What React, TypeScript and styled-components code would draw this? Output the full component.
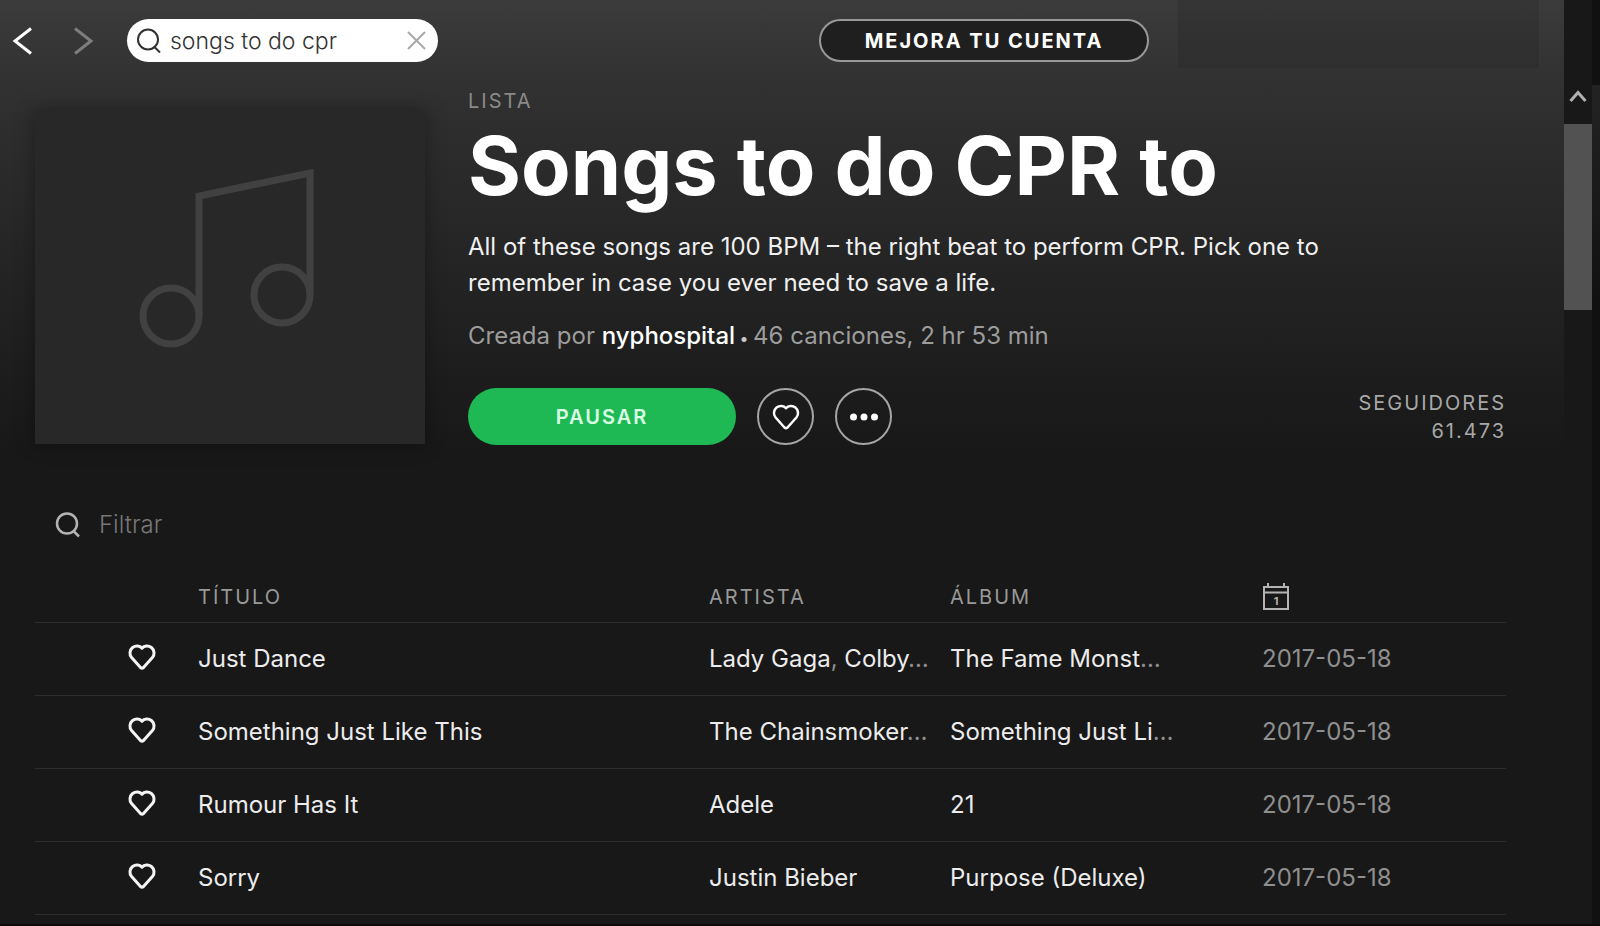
import React, { useState } from "react";
import styled, { createGlobalStyle } from "styled-components";

const GlobalStyle = createGlobalStyle`
  *, *::before, *::after { box-sizing: border-box; }
  body {
    margin: 0;
    background: #181818;
    color: #fff;
    font-family: Inter, "Liberation Sans", sans-serif;
    font-size: 24px;
    line-height: 36px;
  }
  button, input { font: inherit; color: inherit; border: 0; padding: 0; background: none; }
  button { cursor: pointer; }
  input:focus { outline: none; }
  a { color: inherit; text-decoration: none; }
  svg { display: block; flex: none; overflow: visible; }
`;

const Shell = styled.div`
  display: grid;
  grid-template-columns: minmax(0, 1fr) 28px 8px;
  min-height: 100vh;
  border-bottom: 2px solid #0d0a0b;
`;

const Main = styled.main`
  background: linear-gradient(#3b3b3b, #333 70px, #2e2e2e 120px, #181818 450px);
`;

const TopBar = styled.header`
  display: flex;
  align-items: flex-start;
  height: 87px;
  padding-right: 25px;
`;

const History = styled.nav`
  display: flex;
  gap: 40px;
  padding: 27px 32px 0 13px;
`;

const HistoryButton = styled.button<{ $muted?: boolean }>`
  display: flex;
  color: ${(p) => (p.$muted ? "#7d7d7d" : "#fff")};
`;

const SearchBox = styled.form`
  display: flex;
  align-items: center;
  gap: 9px;
  width: 311px;
  height: 43px;
  margin-top: 19px;
  padding: 0 12px 0 10px;
  border-radius: 22px;
  background: #fff;
  color: #333;
`;

const SearchInput = styled.input`
  flex: 1;
  min-width: 0;
  font-size: 23px;
  font-weight: 300;
`;

const ClearButton = styled.button`
  display: flex;
  color: #a8a8a8;
`;

const UpgradeButton = styled.button`
  width: 330px;
  height: 43px;
  margin: 19px 29px 0 auto;
  border: 2px solid #999;
  border-radius: 22px;
  background: #1f1f1f;
  font-size: 20px;
  font-weight: 700;
  letter-spacing: 2px;
`;

const AccountArea = styled.div`
  width: 361px;
  height: 68px;
  background: rgba(24, 24, 24, 0.17);
`;

const Hero = styled.section`
  display: flex;
  align-items: flex-start;
  gap: 43px;
  padding: 0 60px 0 35px;
`;

const Cover = styled.div`
  display: flex;
  flex: none;
  justify-content: center;
  width: 390px;
  height: 334px;
  margin-top: 23px;
  padding-top: 58px;
  background: #282828;
  box-shadow: 0 0 18px rgba(0, 0, 0, 0.35);
  color: #414141;
`;

const Details = styled.div`
  flex: 1;
  min-width: 0;
`;

const Caption = styled.p`
  margin: 0;
  font-size: 20px;
  line-height: 28px;
  letter-spacing: 2px;
  color: #8a8a8a;
`;

const Title = styled.h1`
  margin: 0;
  font-size: 81px;
  line-height: 102px;
  font-weight: 700;
  white-space: nowrap;
`;

const Description = styled.p`
  max-width: 880px;
  margin: 12px 0 17px;
  color: #f0f0f0;
`;

const Byline = styled.p`
  margin: 0 0 32px;
  color: #9c9c9c;
`;

const Owner = styled.a`
  color: #fff;
  font-weight: 500;
`;

const Dot = styled.span`
  font-size: 16px;
  color: #c8c8c8;
`;

const Actions = styled.div`
  display: flex;
  align-items: center;
  gap: 21px;
`;

const PlayButton = styled.button`
  width: 268px;
  height: 57px;
  border-radius: 29px;
  background: #1eb955;
  color: #d9ffe4;
  font-size: 20px;
  font-weight: 600;
  letter-spacing: 2px;
`;

const RoundButton = styled.button`
  display: flex;
  align-items: center;
  justify-content: center;
  width: 57px;
  height: 57px;
  border: 2px solid #a5a5a5;
  border-radius: 50%;
`;

const Followers = styled.p`
  margin: 0 -2px 0 auto;
  font-size: 20px;
  line-height: 28px;
  letter-spacing: 2px;
  text-align: right;
  color: #a8a8a8;
`;

const FollowerCount = styled.span`
  display: block;
`;

const FilterBox = styled.label`
  display: flex;
  align-items: center;
  gap: 19px;
  padding: 62px 56px 0;
  color: #b3b3b3;
`;

const FilterInput = styled.input`
  width: 300px;
  height: 36px;
  font-weight: 300;
  &::placeholder { color: #777; opacity: 1; }
`;

const TrackArea = styled.div`
  padding: 29px 58px 0 35px;
`;

const TrackTable = styled.table`
  width: 100%;
  table-layout: fixed;
  border-collapse: collapse;
`;

const HeadCell = styled.th<{ $width?: string }>`
  width: ${(p) => p.$width ?? "auto"};
  height: 50px;
  padding: 0;
  border-bottom: 1px solid #2d2d2d;
  font-size: 20px;
  font-weight: 400;
  letter-spacing: 2px;
  text-align: left;
  color: #999;
`;

const Cell = styled.td`
  height: 73px;
  padding: 0;
  border-bottom: 1px solid #2d2d2d;
  white-space: nowrap;
  color: #8f8f8f;
`;

const TrackText = styled.span`
  color: #ececec;
`;

const TrackLink = styled.a`
  color: #ececec;
`;

const LikeButton = styled.button`
  display: flex;
  margin: 0 0 4px 93px;
  color: #f4f4f4;
`;

const ScrollTrack = styled.div`
  display: flex;
  flex-direction: column;
  padding-top: 85px;
  background: #181818;
`;

const ScrollUp = styled.button`
  display: flex;
  justify-content: center;
  height: 39px;
  padding-top: 5px;
  color: #b0b0b0;
`;

const ScrollThumb = styled.div`
  height: 186px;
  background: #525252;
`;

const Edge = styled.div`
  background: linear-gradient(#111 85px, #232323 85px, #111 300px);
`;

const Chevron = ({ d }: { d: string }) => (
  <svg width="21" height="28" viewBox="0 0 21 28" fill="none" stroke="currentColor" strokeWidth="3" aria-hidden="true">
    <path d={d} />
  </svg>
);

const SearchIcon = ({ stroke = 2 }: { stroke?: number }) => (
  <svg width="24" height="26" viewBox="0 0 24 26" fill="none" stroke="currentColor" strokeWidth={stroke} aria-hidden="true">
    <circle cx="11" cy="11.500" r="10" />
    <path d="M17 18.500L23 24.500" />
  </svg>
);

const HeartIcon = ({ stroke = 3 }: { stroke?: number }) => (
  <svg width="28" height="26" viewBox="0 0 28 26" fill="none" stroke="currentColor" strokeWidth={stroke} strokeLinejoin="round" aria-hidden="true">
    <path d="M14 4.200C11.800 1.400 7.500 1.200 4.600 3.500C1.500 6 1.100 10.400 3.600 13.500L12.500 23.500Q14 24.800 15.500 23.500L24.400 13.500C26.900 10.400 26.500 6 23.400 3.500C20.500 1.200 16.200 1.400 14 4.200Z" />
  </svg>
);

const NoteIcon = () => (
  <svg width="174" height="180" viewBox="0 0 174 180" fill="none" stroke="currentColor" strokeWidth="7" aria-hidden="true">
    <circle cx="28" cy="148" r="28" />
    <circle cx="139" cy="127" r="28" />
    <path d="M56 148V28L167 5V127" />
  </svg>
);

const CalendarIcon = () => (
  <svg width="28" height="28" viewBox="0 0 28 28" fill="none" stroke="#b3b3b3" strokeWidth="2" role="img" aria-label="Fecha">
    <path d="M2 4H26V26H2ZM2 9.500H26M6 0V4M22 0V4" />
    <text x="14" y="22" fill="#b3b3b3" stroke="none" fontSize="11" fontWeight="700" letterSpacing="0" textAnchor="middle">1</text>
  </svg>
);

type Track = { title: string; artists: string[]; moreArtists?: boolean; album: string; moreAlbum?: boolean };

const tracks: Track[] = [
  { title: "Just Dance", artists: ["Lady Gaga", "Colby"], moreArtists: true, album: "The Fame Monst", moreAlbum: true },
  { title: "Something Just Like This", artists: ["The Chainsmoker"], moreArtists: true, album: "Something Just Li", moreAlbum: true },
  { title: "Rumour Has It", artists: ["Adele"], album: "21" },
  { title: "Sorry", artists: ["Justin Bieber"], album: "Purpose (Deluxe)" },
];

export default function App() {
  const [query, setQuery] = useState("songs to do cpr");

  return (
    <>
      <GlobalStyle />
      <Shell>
        <Main>
          <TopBar>
            <History aria-label="Historial">
              <HistoryButton aria-label="Atrás"><Chevron d="M18 1.500L2 14L18 26.500" /></HistoryButton>
              <HistoryButton $muted aria-label="Adelante"><Chevron d="M1 1.500L17 14L1 26.500" /></HistoryButton>
            </History>
            <SearchBox role="search" onSubmit={(e) => e.preventDefault()}>
              <SearchIcon />
              <SearchInput aria-label="Buscar" value={query} onChange={(e) => setQuery(e.target.value)} />
              <ClearButton type="button" aria-label="Borrar" onClick={() => setQuery("")}>
                <svg width="19" height="19" viewBox="0 0 19 19" stroke="currentColor" strokeWidth="2" aria-hidden="true">
                  <path d="M1 1L18 18M18 1L1 18" />
                </svg>
              </ClearButton>
            </SearchBox>
            <UpgradeButton>MEJORA TU CUENTA</UpgradeButton>
            <AccountArea />
          </TopBar>

          <Hero>
            <Cover><NoteIcon /></Cover>
            <Details>
              <Caption>LISTA</Caption>
              <Title>Songs to do CPR to</Title>
              <Description>
                All of these songs are 100 BPM – the right beat to perform CPR. Pick one to remember in case you ever need to save a life.
              </Description>
              <Byline>
                Creada por <Owner href="#nyphospital">nyphospital</Owner>
                <Dot> • </Dot>
                46 canciones, 2 hr 53 min
              </Byline>
              <Actions>
                <PlayButton>PAUSAR</PlayButton>
                <RoundButton aria-label="Me gusta"><HeartIcon stroke={2.5} /></RoundButton>
                <RoundButton aria-label="Más opciones">
                  <svg width="28" height="8" viewBox="0 0 28 8" fill="#fff" aria-hidden="true">
                    <circle cx="3.500" cy="4" r="3.500" />
                    <circle cx="14" cy="4" r="3.500" />
                    <circle cx="24.500" cy="4" r="3.500" />
                  </svg>
                </RoundButton>
                <Followers>SEGUIDORES<FollowerCount>61.473</FollowerCount></Followers>
              </Actions>
            </Details>
          </Hero>

          <FilterBox>
            <SearchIcon stroke={2.5} />
            <FilterInput aria-label="Filtrar" placeholder="Filtrar" />
          </FilterBox>

          <TrackArea>
            <TrackTable>
              <thead>
                <tr>
                  <HeadCell $width="163px" aria-label="Guardar" />
                  <HeadCell>TÍTULO</HeadCell>
                  <HeadCell $width="241px">ARTISTA</HeadCell>
                  <HeadCell $width="312px">ÁLBUM</HeadCell>
                  <HeadCell $width="244px"><CalendarIcon /></HeadCell>
                </tr>
              </thead>
              <tbody>
                {tracks.map((t) => (
                  <tr key={t.title}>
                    <Cell><LikeButton aria-label={`Guardar ${t.title}`}><HeartIcon /></LikeButton></Cell>
                    <Cell><TrackText>{t.title}</TrackText></Cell>
                    <Cell>
                      {t.artists.map((a, i) => (
                        <React.Fragment key={a}>
                          {i > 0 && ", "}
                          <TrackLink href="#artista">{a}</TrackLink>
                        </React.Fragment>
                      ))}
                      {t.moreArtists && "…"}
                    </Cell>
                    <Cell>
                      <TrackLink href="#album">{t.album}</TrackLink>
                      {t.moreAlbum && "…"}
                    </Cell>
                    <Cell>2017-05-18</Cell>
                  </tr>
                ))}
              </tbody>
            </TrackTable>
          </TrackArea>
        </Main>
        <ScrollTrack>
          <ScrollUp aria-label="Subir">
            <svg width="18" height="12" viewBox="0 0 18 12" fill="none" stroke="currentColor" strokeWidth="3" aria-hidden="true">
              <path d="M1.500 11L9 2.500L16.500 11" />
            </svg>
          </ScrollUp>
          <ScrollThumb />
        </ScrollTrack>
        <Edge />
      </Shell>
    </>
  );
}
